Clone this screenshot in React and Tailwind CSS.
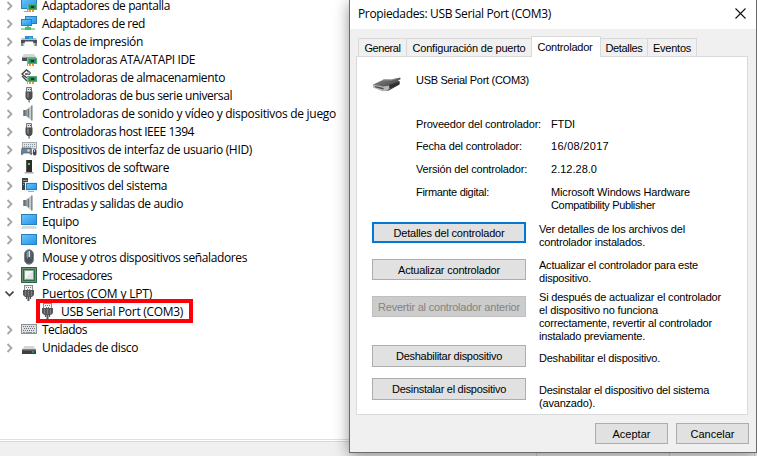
import React, { useLayoutEffect, useRef } from "react";

// Text line whose tracking is adjusted so that it fills the given width.
function Fit({ w, className = "", children }) {
  const ref = useRef(null);
  useLayoutEffect(() => {
    const el = ref.current;
    el.style.letterSpacing = "0px";
    const natural = el.getBoundingClientRect().width;
    el.style.letterSpacing = `${(w - natural) / children.length}px`;
  }, [w, children]);
  return (
    <span ref={ref} className={`inline-block whitespace-pre ${className}`}>
      {children}
    </span>
  );
}

const Svg = ({ children }) => (
  <svg width="16" height="16" viewBox="0 0 16 16" className="shrink-0">
    {children}
  </svg>
);

const Defs = () => (
  <svg width="0" height="0" className="absolute">
    <defs>
      <linearGradient id="screen" x1="0" y1="0" x2="1" y2="1">
        <stop offset="0" stopColor="#6cc4f8" />
        <stop offset="1" stopColor="#1e96ee" />
      </linearGradient>
      <linearGradient id="metal" x1="0" y1="0" x2="1" y2="0">
        <stop offset="0" stopColor="#8a9298" />
        <stop offset="1" stopColor="#d5d9dc" />
      </linearGradient>
      <linearGradient id="plug" x1="0" y1="0" x2="1" y2="1">
        <stop offset="0" stopColor="#8d8d8d" />
        <stop offset="1" stopColor="#2c2c2c" />
      </linearGradient>
    </defs>
  </svg>
);

const Card = () => (
  <g>
    <rect x="6" y="7" width="1" height="8" fill="#9aa3a8" />
    <rect x="7" y="7" width="9" height="6" fill="#2f8a5e" />
    <rect x="7.5" y="7.5" width="8" height="5" fill="none" stroke="#4fae80" />
    <rect x="10" y="9" width="3" height="2" fill="#12392a" />
    <rect x="8" y="13" width="2" height="2" fill="#e89a2c" />
    <rect x="11" y="13" width="2" height="2" fill="#e89a2c" />
  </g>
);

const icons = {
  display: (
    <Svg>
      <rect x="0.5" y="1.5" width="15" height="10" fill="url(#screen)" stroke="#2b7fb8" />
      <rect x="3" y="14" width="5" height="1" fill="#a5aeb4" />
      <Card />
    </Svg>
  ),
  network: (
    <Svg>
      <rect x="4.5" y="1.5" width="11" height="7" fill="url(#screen)" stroke="#2b7fb8" />
      <rect x="0.5" y="4.5" width="10" height="6" fill="url(#screen)" stroke="#2b7fb8" />
      <rect x="6" y="11" width="2" height="2" fill="#5cc777" />
      <rect x="0" y="13" width="14" height="2" fill="#8fdca4" />
      <rect x="4" y="12" width="6" height="3" fill="#4dbb69" />
    </Svg>
  ),
  printer: (
    <Svg>
      <rect x="4" y="3" width="8" height="3" fill="#2c8be0" />
      <rect x="8" y="4" width="3" height="2" fill="#35c978" />
      <path d="M1 5h3v1h8V5h3l1 2v6H0V7z" fill="#b9bfc3" />
      <rect x="0" y="7" width="16" height="3" fill="#4a5156" />
      <rect x="0" y="10" width="2" height="3" fill="#7f878c" />
      <rect x="14" y="10" width="2" height="3" fill="#7f878c" />
      <path d="M4 8.5h8l1 5H3z" fill="#ffffff" />
    </Svg>
  ),
  ata: (
    <Svg>
      <path d="M3 3h10l2 3H1z" fill="#d3d6d8" />
      <rect x="1" y="6" width="14" height="4" fill="#4a4e51" />
      <rect x="1" y="6" width="14" height="1" fill="#93989b" />
      <Card />
    </Svg>
  ),
  storage: (
    <Svg>
      <path d="M9 3.5 5.5 1 1 5l5 4M4 5h5M1 7l5 5" fill="none" stroke="#3f4447" strokeWidth="1.4" />
      <path d="M6 2l4 2-3 2" fill="#b6bbbd" stroke="#555b5f" strokeWidth=".7" />
      <Card />
    </Svg>
  ),
  usb: (
    <Svg>
      <path d="M5.5 5V.5h5V5" fill="#dfe1e2" stroke="#777" />
      <rect x="7" y="2" width="1" height="1" fill="#555" />
      <rect x="9" y="2" width="1" height="1" fill="#555" />
      <path d="M4.5 4.5h7V10q0 2-2 3h-3q-2-1-2-3z" fill="#4b4d4f" />
      <rect x="6" y="5.5" width="2" height="5" fill="#777a7c" />
      <rect x="7.5" y="12.5" width="1.2" height="3" fill="#5d5f60" />
    </Svg>
  ),
  sound: (
    <Svg>
      <rect x="2.5" y="5" width="3" height="6" fill="#7a8388" />
      <path d="M5 5l5.5-4.5v15L5 11z" fill="url(#metal)" />
      <rect x="10" y="0.5" width="1.6" height="15" fill="#858d92" />
      <path d="M3 5v6" stroke="#596268" />
      <path d="M7.5 4v8" stroke="#6b7479" />
    </Svg>
  ),
  hid: (
    <Svg>
      <rect x="1.5" y="1.5" width="14" height="6" fill="#e3e6e8" stroke="#a3abb0" />
      <path d="M3 3.5h11M3 5.5h11" stroke="#8c959b" strokeDasharray="1 1" />
      <path d="M1 7h9l1 6q-1 2-2.5-1h-6Q1 15 0 13z" fill="#75828b" stroke="#4d5a63" strokeWidth=".7" />
      <circle cx="3" cy="9.5" r="1.3" fill="#3e8fd2" />
      <circle cx="7.5" cy="9.5" r="1.3" fill="#d8dcdf" />
      <rect x="12" y="8" width="3.5" height="6.5" rx="1.7" fill="#3c464d" />
      <rect x="13" y="8.5" width="1" height="2.5" fill="#a8d4ee" />
    </Svg>
  ),
  software: (
    <Svg>
      <path d="M5 1h6v12H5z" fill="#2c2c2c" />
      <path d="M5 1h1v12H5z" fill="#555" />
      <rect x="7" y="4" width="2" height="2" fill="#3ee04a" />
      <path d="M4 13h8l1 1.5H3.5z" fill="#a6a9ab" />
    </Svg>
  ),
  system: (
    <Svg>
      <rect x="1" y="1" width="6" height="12" fill="#3d4347" />
      <path d="M2 3.5h4M2 5.5h4" stroke="#8c959a" />
      <rect x="2" y="7" width="1" height="1" fill="#43db55" />
      <rect x="4.5" y="5.5" width="11" height="8" fill="url(#screen)" stroke="#e2edf4" />
      <rect x="5.5" y="6.5" width="10" height="6" fill="url(#screen)" stroke="#2b7fb8" />
      <rect x="7" y="14" width="6" height="1" fill="#98b4c5" />
    </Svg>
  ),
  computer: (
    <Svg>
      <rect x="0.5" y="1.5" width="15" height="10" fill="url(#screen)" stroke="#2b7fb8" />
      <path d="M2 13h12l2 2.5H0z" fill="#b5c0c8" />
      <rect x="1.5" y="13.5" width="13" height="1" fill="#eef2f4" />
    </Svg>
  ),
  monitor: (
    <Svg>
      <rect x="0.5" y="3.5" width="15" height="10" fill="url(#screen)" stroke="#2b7fb8" />
    </Svg>
  ),
  mouse: (
    <Svg>
      <rect x="3.5" y="0.8" width="9" height="14.4" rx="4.5" fill="#4a535a" stroke="#7e878d" />
      <path d="M5.5 4q.5-2 1.5-2v8q-1.6-1-1.5-3z" fill="#8b959c" />
      <rect x="7.5" y="2" width="1.5" height="6" fill="#cbe9f8" />
      <path d="M10 3v7" stroke="#6c757b" />
    </Svg>
  ),
  cpu: (
    <Svg>
      <rect x="0.7" y="0.7" width="14.6" height="14.6" fill="#2f6a4b" stroke="#245239" strokeWidth="1.2" />
      <rect x="1.5" y="1.5" width="13" height="13" fill="none" stroke="#b3c99c" strokeDasharray="1 1" />
      <rect x="3.5" y="3.5" width="9" height="9" fill="#dfe5e1" stroke="#8ca497" />
      <path d="M4 12V4h8z" fill="#f2f5f3" />
    </Svg>
  ),
  port: (
    <Svg>
      <rect x="3.5" y="0.5" width="8" height="5" fill="#f0f0f0" stroke="#8b8b8b" />
      <path d="M5 2.5h6M6 4.5h4" stroke="#777" strokeDasharray="1 1" />
      <path d="M2 5h11v5l-2 2H4l-2-2z" fill="#55585a" />
      <path d="M4.5 6v5M7.5 6v5M10.5 6v5" stroke="#7b7e80" />
      <path d="M5.5 12v2M9.5 12v2" stroke="#505254" strokeWidth="1.2" />
      <rect x="6.5" y="12" width="2" height="4" fill="#555" />
    </Svg>
  ),
  keyboard: (
    <Svg>
      <rect x="0.5" y="3.5" width="15" height="9" fill="#dfe2e4" stroke="#8c9297" />
      <path d="M2 5.5h12M3 7.5h11M2 9.5h12" stroke="#6d7479" strokeDasharray="1 1" />
      <path d="M2 11.5h2M5 11.5h6M12 11.5h2" stroke="#8a9095" />
    </Svg>
  ),
  disk: (
    <Svg>
      <path d="M3.5 7h9l2.5 4H1z" fill="#d3d6d8" />
      <rect x="1" y="10.5" width="14" height="4.5" fill="#3c3f41" />
      <rect x="1" y="10.5" width="14" height="1" fill="#75797b" />
      <rect x="11" y="12.5" width="2" height="1" fill="#35e04a" />
    </Svg>
  ),
};

const tree = [
  ["display", "Adaptadores de pantalla", 128],
  ["network", "Adaptadores de red", 103],
  ["printer", "Colas de impresión", 101],
  ["ata", "Controladoras ATA/ATAPI IDE", 153],
  ["storage", "Controladoras de almacenamiento", 183],
  ["usb", "Controladoras de bus serie universal", 190],
  ["sound", "Controladoras de sonido y vídeo y dispositivos de juego", 294],
  ["usb", "Controladoras host IEEE 1394", 152],
  ["hid", "Dispositivos de interfaz de usuario (HID)", 210],
  ["software", "Dispositivos de software", 127],
  ["system", "Dispositivos del sistema", 125],
  ["sound", "Entradas y salidas de audio", 141],
  ["computer", "Equipo", 37],
  ["monitor", "Monitores", 54],
  ["mouse", "Mouse y otros dispositivos señaladores", 205],
  ["cpu", "Procesadores", 70],
  ["port", "Puertos (COM y LPT)", 110, "open"],
  ["port", "USB Serial Port (COM3)", 122, "child"],
  ["keyboard", "Teclados", 45],
  ["disk", "Unidades de disco", 96],
];

function Chevron({ open }) {
  return (
    <svg width="10" height="10" viewBox="0 0 10 10" className="mt-[2px] mr-[7px] shrink-0">
      {open ? (
        <path d="M1.5 2.5l4 4 4-4" fill="none" stroke="#404040" strokeWidth="1.7" />
      ) : (
        <path d="M3.5 1l4 4-4 4" fill="none" stroke="#a6a6a6" strokeWidth="1.8" />
      )}
    </svg>
  );
}

function TreeRow({ icon, label, width, state }) {
  const child = state === "child";
  return (
    <div className={`relative flex h-[18px] items-center ${child ? "pl-[40px]" : "pl-[4px]"}`}>
      {!child && <Chevron open={state === "open"} />}
      {icons[icon]}
      <Fit w={width} className="ml-[5px] pt-px">
        {label}
      </Fit>
      {child && <div className="absolute -top-[3px] left-[36px] h-[24px] w-[157px] border-4 border-[#fb0007]" />}
    </div>
  );
}

const tabs = [
  ["General", 36, "w-[49px]"],
  ["Configuración de puerto", 113, "w-[124px]"],
  ["Controlador", 55, "w-[70px]"],
  ["Detalles", 37, "w-[47px]"],
  ["Eventos", 38, "w-[49px]"],
];

const facts = [
  ["Proveedor del controlador:", 125, [["FTDI", 24]], "h-[22px]"],
  ["Fecha del controlador:", 106, [["16/08/2017", 58]], "h-[23px]"],
  ["Versión del controlador:", 111, [["2.12.28.0", 46]], "h-[23px]"],
  ["Firmante digital:", 73, [["Microsoft Windows Hardware", 139], ["Compatibility Publisher", 104]], "h-[36px]"],
];

const actions = [
  {
    label: "Detalles del controlador", w: 111, row: "h-[37px]", btn: "h-[21px] border-2 border-[#0078d7] bg-[#e1e1e1]", off: "mt-[1px]",
    lines: [["Ver detalles de los archivos del", 146], ["controlador instalados.", 106]],
  },
  {
    label: "Actualizar controlador", w: 102, row: "h-[37px]", btn: "h-[21px] border border-[#adadad] bg-[#e1e1e1]", off: "mt-0",
    lines: [["Actualizar el controlador para este", 159], ["dispositivo.", 52]],
  },
  {
    label: "Revertir al controlador anterior", w: 142, row: "h-[49px]", btn: "h-[21px] border border-[#bfbfbf] bg-[#cccccc] text-[#838383]", off: "-mt-[5px]",
    lines: [
      ["Si después de actualizar el controlador", 182],
      ["el dispositivo no funciona", 119],
      ["correctamente, revertir al controlador", 173],
      ["instalado previamente.", 106],
    ],
  },
  {
    label: "Deshabilitar dispositivo", w: 106, row: "h-[33px]", btn: "h-[22px] border border-[#adadad] bg-[#e1e1e1]", off: "mt-[7px]",
    lines: [["Deshabilitar el dispositivo.", 121]],
  },
  {
    label: "Desinstalar el dispositivo", w: 114, row: "h-[36px]", btn: "h-[22px] border border-[#adadad] bg-[#e1e1e1]", off: "mt-[6px]",
    lines: [["Desinstalar el dispositivo del sistema", 170], ["(avanzado).", 56]],
  },
];

function Lines({ lines }) {
  return lines.map(([t, w]) => (
    <div key={t} className="flex h-[13px]">
      <Fit w={w}>{t}</Fit>
    </div>
  ));
}

function SerialConnector() {
  return (
    <svg width="30" height="18" viewBox="0 0 30 18">
      <path d="M1 7.5 12 2.5l8 .3 8-2.3.8 1.5-3 1.8 2 .5v3L17 13.5l-5 .5z" fill="url(#plug)" />
      <path d="M11 3l8 0 6-1.5" stroke="#8a8a8a" fill="none" />
      <path d="M0.8 7.5 11 9.5l7-1 .5 3-5 2.5-3 .3L1 10.5z" fill="#b5b5b5" />
      <path d="M3 8.9l8.5 2v1.7L3 10.3z" fill="#4a4a4a" />
      <path d="M17 8l10-3.2v3L17.5 12z" fill="#303030" />
    </svg>
  );
}

function Dialog() {
  return (
    <div className="absolute left-[349px] top-0 flex h-[453px] w-[408px] flex-col border border-t-0 border-[#6b6b6b] bg-[#f0f0f0] font-['Liberation_Sans',Arial,sans-serif] text-[11px] leading-[13px] shadow-[0_3px_14px_rgba(0,0,0,0.42)]">
      <div className="flex h-[29px] shrink-0 items-center justify-between bg-white pl-[8px] pr-[10px] font-['Open_Sans',sans-serif] text-[12px] leading-[16px]">
        <Fit w={193} className="-mt-px">Propiedades: USB Serial Port (COM3)</Fit>
        <svg width="11" height="11" viewBox="0 0 11 11" className="-mt-[3px]">
          <path d="M.5.5l10 10M10.5.5l-10 10" stroke="#111" strokeWidth="1.1" />
        </svg>
      </div>
      <div className="flex h-[27px] shrink-0 items-end pl-[8px]">
        {tabs.map(([t, w, cls], i) => {
          const active = i === 2;
          return (
            <div
              key={t}
              className={`${cls} flex justify-center border-[#d9d9d9] ${
                active
                  ? "relative z-10 -mb-px h-[21px] border-x border-t bg-white pt-[4px] pr-[2px]"
                  : "h-[18px] border-t pt-[3px] " + (i === 3 || i === 4 ? "border-r" : i === 0 ? "border-x" : "")
              }`}
            >
              <Fit w={w}>{t}</Fit>
            </div>
          );
        })}
      </div>
      <div className="ml-[6px] flex h-[359px] w-[392px] shrink-0 flex-col border border-[#d9d9d9] bg-white pl-[15px]">
        <div className="flex h-[61px] pt-[17px]">
          <div className="w-[44px] pt-[3px]">
            <SerialConnector />
          </div>
          <Fit w={113} className="h-[13px]">USB Serial Port (COM3)</Fit>
        </div>
        <div className="h-[104px] pl-[44px]">
          {facts.map(([k, w, lines, h]) => (
            <div key={k} className={`${h} flex items-start`}>
              <div className="w-[135px]">
                <Fit w={w}>{k}</Fit>
              </div>
              <div>
                <Lines lines={lines} />
              </div>
            </div>
          ))}
        </div>
        {actions.map((a) => (
          <div key={a.label} className={`${a.row} flex shrink-0 items-start`}>
            <button className={`${a.btn} flex w-[154px] items-center justify-center pt-px`}>
              <Fit w={a.w}>{a.label}</Fit>
            </button>
            <div className={`${a.off} ml-[13px]`}>
              <Lines lines={a.lines} />
            </div>
          </div>
        ))}
      </div>
      <div className="mt-[8px] flex justify-end gap-[8px] pr-[7px]">
        <button className="flex h-[21px] w-[73px] items-center justify-center border border-[#adadad] bg-[#e1e1e1] pt-px">
          <Fit w={38}>Aceptar</Fit>
        </button>
        <button className="flex h-[21px] w-[73px] items-center justify-center border border-[#adadad] bg-[#e1e1e1] pt-px">
          <Fit w={44}>Cancelar</Fit>
        </button>
      </div>
    </div>
  );
}

export default function App() {
  return (
    <div className="relative flex h-[456px] w-[757px] flex-col overflow-hidden bg-white text-black">
      <Defs />
      <div className="h-[439px] shrink-0 font-['Open_Sans',sans-serif] text-[12px] leading-[10px]">
        <div className="-mt-[4px]">
          {tree.map(([icon, label, width, state], i) => (
            <TreeRow key={i} icon={icon} label={label} width={width} state={state} />
          ))}
        </div>
      </div>
      <div className="flex h-[17px] shrink-0 flex-col border-t border-[#dfdfdf] pt-px">
        <div className="flex flex-1 border-t border-[#d7d7d7] bg-[#f0f0f0]">
          <div className="w-[537px] border-r border-[#d0d0d0]" />
          <div className="w-[133px] border-r border-[#d0d0d0]" />
          <div className="w-[85px] border-r border-[#d0d0d0]" />
        </div>
      </div>
      <Dialog />
    </div>
  );
}
